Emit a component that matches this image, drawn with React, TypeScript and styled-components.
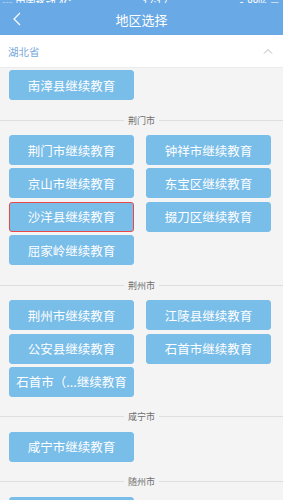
import React from "react";
import styled, { createGlobalStyle } from "styled-components";

const Global = createGlobalStyle`
  html, body { margin: 0; padding: 0; background: #f4f4f4; overflow: hidden; }
  body { font-family: "Noto Sans CJK SC", "Noto Sans", sans-serif; }
  * { box-sizing: border-box; }
`;

const Page = styled.div`
  width: 283px;
  min-height: 500px;
  background: #f4f4f4;
`;

const Header = styled.header`
  background: #69a9e5;
  height: 35px;
  display: flex;
  flex-direction: column;
`;

const StatusSliver = styled.div`
  height: 3px;
  overflow: hidden;
  display: flex;
  align-items: flex-end;
  justify-content: space-between;
  padding: 0 4px 0 2px;
  color: #fff;
  font-size: 10px;
  line-height: 12px;
  font-family: "Liberation Sans", "Noto Sans CJK SC", sans-serif;
`;

const StatusText = styled.span`
  white-space: nowrap;
  flex: 0 0 auto;
  transform: translateY(7px);
`;

const TitleBar = styled.div`
  flex: 1;
  display: grid;
  grid-template-columns: 40px 1fr 40px;
  align-items: center;
`;

const BackButton = styled.div`
  display: flex;
  align-items: center;
  padding-left: 12px;
  height: 100%;
`;

const Title = styled.h1`
  margin: 0;
  text-align: center;
  color: #fff;
  font-size: 13px;
  font-weight: 400;
  line-height: 1;
`;

const ProvinceRow = styled.div`
  height: 33px;
  background: #fff;
  display: flex;
  align-items: center;
  justify-content: space-between;
  padding: 0 10px 0 8px;
  border-bottom: 1px solid #ececec;
`;

const ProvinceName = styled.span`
  color: #7aa9dc;
  font-size: 10.5px;
`;

const Content = styled.div`
  padding-top: 2px;
`;

const Grid = styled.div`
  display: grid;
  grid-template-columns: 125px 125px;
  column-gap: 12px;
  row-gap: 3.4px;
  padding: 0 12px 0 9px;
`;

const OrgButton = styled.button<{ $selected?: boolean }>`
  height: 30px;
  border-radius: 3px;
  background: #79bde9;
  border: 1px solid ${(p) => (p.$selected ? "#e8474c" : "#79bde9")};
  color: #fff;
  font-family: "Noto Sans CJK SC", sans-serif;
  font-size: 12.5px;
  padding: 0;
  white-space: nowrap;
  display: flex;
  align-items: center;
  justify-content: center;
`;

const Divider = styled.div`
  display: flex;
  align-items: center;
  gap: 4px;
  height: 14px;
  margin: 13px 0 8px;
  &::before, &::after {
    content: "";
    flex: 1;
    height: 1px;
    background: #dedede;
  }
`;

const DividerLabel = styled.span`
  font-size: 9px;
  color: #707070;
  line-height: 1;
`;

type Section = { city?: string; items: { name: string; selected?: boolean }[] };

const sections: Section[] = [
  { items: [{ name: "南漳县继续教育" }] },
  {
    city: "荆门市",
    items: [
      { name: "荆门市继续教育" },
      { name: "钟祥市继续教育" },
      { name: "京山市继续教育" },
      { name: "东宝区继续教育" },
      { name: "沙洋县继续教育", selected: true },
      { name: "掇刀区继续教育" },
      { name: "屈家岭继续教育" },
    ],
  },
  {
    city: "荆州市",
    items: [
      { name: "荆州市继续教育" },
      { name: "江陵县继续教育" },
      { name: "公安县继续教育" },
      { name: "石首市继续教育" },
      { name: "石首市（...继续教育" },
    ],
  },
  { city: "咸宁市", items: [{ name: "咸宁市继续教育" }] },
  { city: "随州市", items: [{ name: "随州市继续教育" }] },
];

export default function App() {
  return (
    <Page>
      <Global />
      <Header>
        <StatusSliver>
          <StatusText>▪▪▪ 中国移动 4G</StatusText>
          <StatusText>17:17</StatusText>
          <StatusText>● 88% ▭</StatusText>
        </StatusSliver>
        <TitleBar>
          <BackButton>
            <svg width="9" height="14" viewBox="0 0 9 14">
              <path d="M8 1 L2 7 L8 13" fill="none" stroke="#fff" strokeWidth="1.2" />
            </svg>
          </BackButton>
          <Title>地区选择</Title>
          <span />
        </TitleBar>
      </Header>
      <ProvinceRow>
        <ProvinceName>湖北省</ProvinceName>
        <svg width="10" height="6" viewBox="0 0 10 6">
          <path d="M1 5.5 L5 1.5 L9 5.5" fill="none" stroke="#b5b5b5" strokeWidth="1" />
        </svg>
      </ProvinceRow>
      <Content>
        {sections.map((s, i) => (
          <React.Fragment key={i}>
            {s.city && (
              <Divider>
                <DividerLabel>{s.city}</DividerLabel>
              </Divider>
            )}
            <Grid>
              {s.items.map((it) => (
                <OrgButton key={it.name} $selected={it.selected}>
                  {it.name}
                </OrgButton>
              ))}
            </Grid>
          </React.Fragment>
        ))}
      </Content>
    </Page>
  );
}
